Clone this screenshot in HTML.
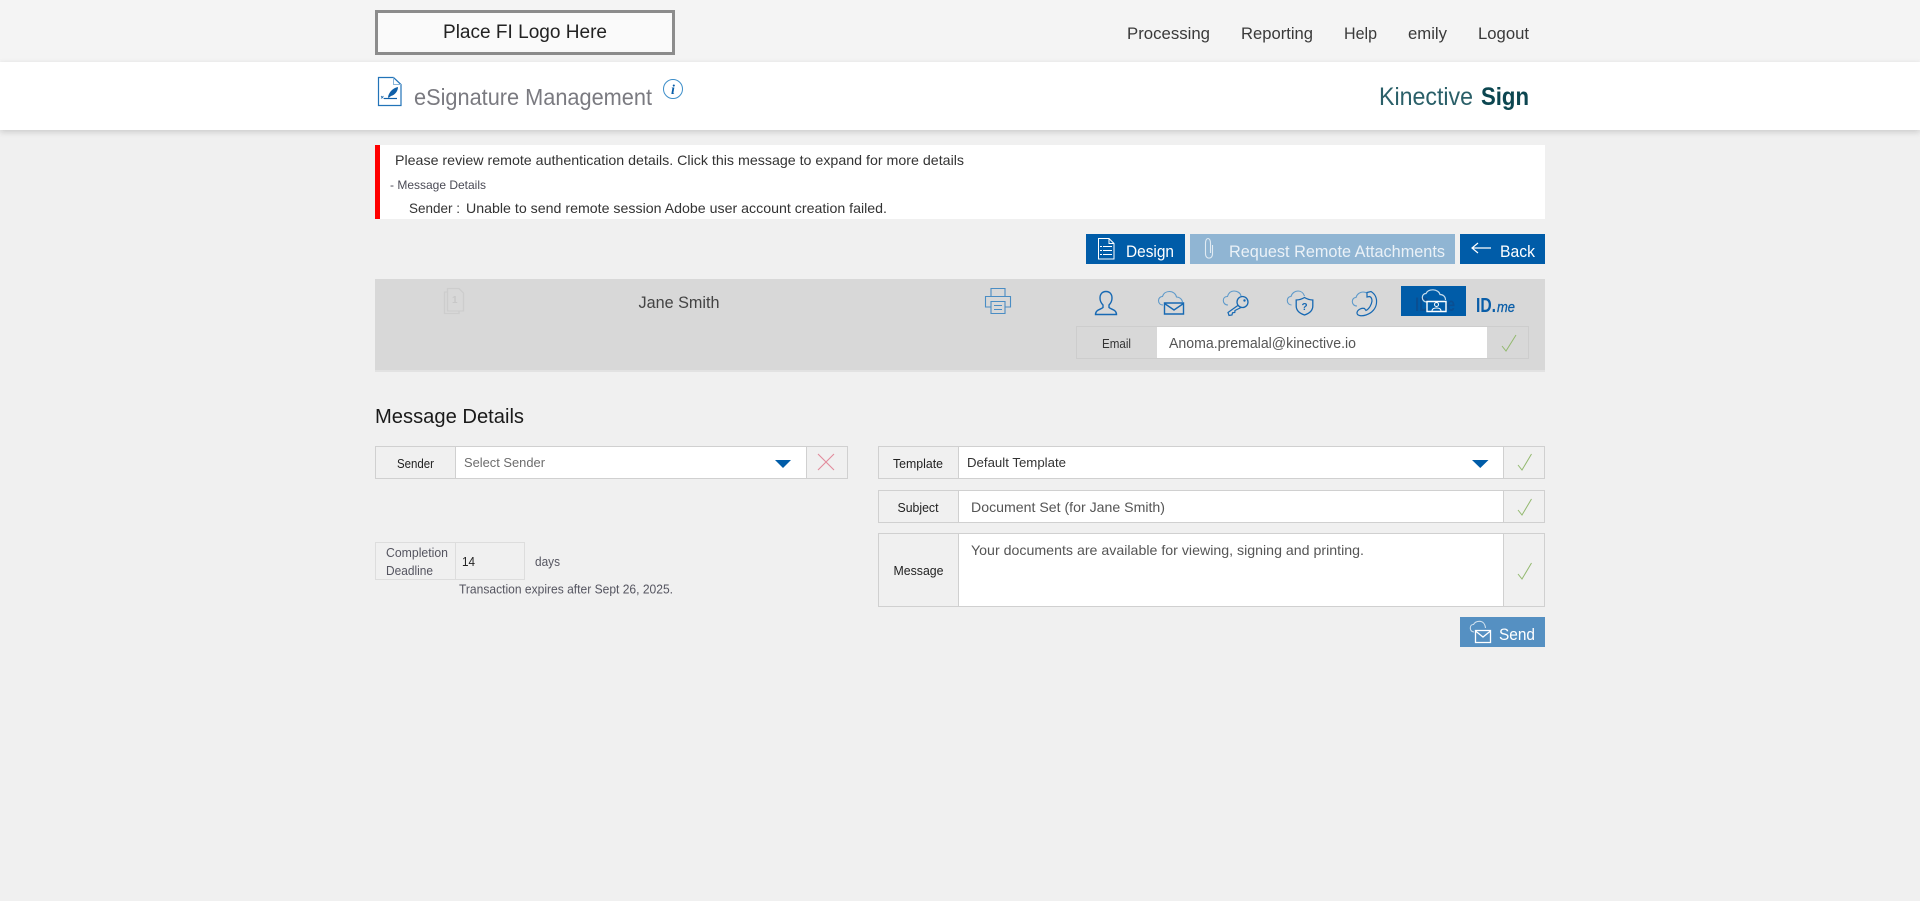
<!DOCTYPE html>
<html lang="en">
<head>
<meta charset="utf-8">
<title>eSignature Management</title>
<style>
html,body{margin:0;padding:0;width:1920px;height:901px;overflow:hidden;background:#f0f0f0;font-family:"Liberation Sans",sans-serif}
.b{position:absolute;box-sizing:border-box}
svg.o{position:absolute;left:0;top:0}
text{font-family:"Liberation Sans",sans-serif}
</style>
</head>
<body>
<div class="b" style="left:0;top:0;width:1920px;height:62px;background:#f4f4f4"></div>
<div class="b" style="left:0;top:62px;width:1920px;height:68px;background:#fff;box-shadow:0 2px 6px rgba(0,0,0,.16)"></div>
<div class="b" style="left:375px;top:10px;width:300px;height:45px;background:#fafafa;border:3px solid #8c8c8c"></div>

<div class="b" style="left:375px;top:145px;width:1170px;height:74px;background:#fff;border-left:5px solid #f00"></div>

<div class="b" style="left:1086px;top:234px;width:99px;height:30px;background:#005ca8"></div>
<div class="b" style="left:1190px;top:234px;width:265px;height:30px;background:#90b5d3"></div>
<div class="b" style="left:1460px;top:234px;width:85px;height:30px;background:#005ca8"></div>

<div class="b" style="left:375px;top:279px;width:1170px;height:93px;background:#d8d8d8;border-bottom:2px solid #e2e2e2"></div>
<div class="b" style="left:1401px;top:286px;width:65px;height:30px;background:#005ca8"></div>

<div class="b" style="left:1076px;top:326px;width:453px;height:33px;border:1px solid #cdcdcd"></div>
<div class="b" style="left:1157px;top:327px;width:330px;height:31px;background:#fff"></div>

<div class="b" style="left:375px;top:446px;width:473px;height:33px;border:1px solid #d0d0d0"></div>
<div class="b" style="left:455px;top:446px;width:352px;height:33px;background:#fff;border:1px solid #d0d0d0"></div>

<div class="b" style="left:375px;top:542px;width:150px;height:38px;border:1px solid #ddd"></div>
<div class="b" style="left:455px;top:542px;width:1px;height:38px;background:#ddd"></div>

<div class="b" style="left:878px;top:446px;width:667px;height:33px;border:1px solid #d0d0d0"></div>
<div class="b" style="left:958px;top:446px;width:546px;height:33px;background:#fff;border:1px solid #d0d0d0"></div>
<div class="b" style="left:878px;top:490px;width:667px;height:33px;border:1px solid #d0d0d0"></div>
<div class="b" style="left:958px;top:490px;width:546px;height:33px;background:#fff;border:1px solid #d0d0d0"></div>
<div class="b" style="left:878px;top:533px;width:667px;height:74px;border:1px solid #d0d0d0"></div>
<div class="b" style="left:958px;top:533px;width:546px;height:74px;background:#fff;border:1px solid #d0d0d0"></div>

<div class="b" style="left:1460px;top:617px;width:85px;height:30px;background:#5590c2"></div>

<svg class="o" width="1920" height="901" viewBox="0 0 1920 901" xmlns="http://www.w3.org/2000/svg">
<text x="443" y="38" font-size="19" fill="#222" textLength="164" lengthAdjust="spacingAndGlyphs">Place FI Logo Here</text>

<g font-size="16.5" fill="#3a3a3a">
<text x="1127" y="39" textLength="83" lengthAdjust="spacingAndGlyphs">Processing</text>
<text x="1241" y="39" textLength="72" lengthAdjust="spacingAndGlyphs">Reporting</text>
<text x="1344" y="39" textLength="33" lengthAdjust="spacingAndGlyphs">Help</text>
<text x="1408" y="39" textLength="39" lengthAdjust="spacingAndGlyphs">emily</text>
<text x="1478" y="39" textLength="51" lengthAdjust="spacingAndGlyphs">Logout</text>
</g>

<text x="414" y="105" font-size="23" fill="#7a7a80" textLength="238" lengthAdjust="spacingAndGlyphs">eSignature Management</text>
<text x="1379" y="105" font-size="25" fill="#2a5f68" textLength="94" lengthAdjust="spacingAndGlyphs">Kinective</text>
<text x="1481" y="105" font-size="25" font-weight="700" fill="#0c4650" textLength="48" lengthAdjust="spacingAndGlyphs">Sign</text>

<text x="395" y="165" font-size="14" fill="#333" textLength="569" lengthAdjust="spacingAndGlyphs">Please review remote authentication details. Click this message to expand for more details</text>
<text x="390" y="189" font-size="12" fill="#4a4a55" textLength="96" lengthAdjust="spacingAndGlyphs">- Message Details</text>
<text x="409" y="213" font-size="14" fill="#333" textLength="51" lengthAdjust="spacingAndGlyphs">Sender :</text>
<text x="466" y="213" font-size="14" fill="#333" textLength="421" lengthAdjust="spacingAndGlyphs">Unable to send remote session Adobe user account creation failed.</text>

<text x="1126" y="257" font-size="17" fill="#fff" textLength="48" lengthAdjust="spacingAndGlyphs">Design</text>
<text x="1229" y="257" font-size="17" fill="#eaf1f7" textLength="216" lengthAdjust="spacingAndGlyphs">Request Remote Attachments</text>
<text x="1500" y="257" font-size="17" fill="#fff" textLength="35" lengthAdjust="spacingAndGlyphs">Back</text>

<text x="638.500" y="308" font-size="17" fill="#444" textLength="81" lengthAdjust="spacingAndGlyphs">Jane Smith</text>
<text x="1102" y="348" font-size="13" fill="#333" textLength="29" lengthAdjust="spacingAndGlyphs">Email</text>
<text x="1169" y="348" font-size="14.500" fill="#555" textLength="187" lengthAdjust="spacingAndGlyphs">Anoma.premalal@kinective.io</text>

<text x="1415" y="311" font-size="19" font-weight="700" fill="#0a4f92" textLength="40" lengthAdjust="spacingAndGlyphs">ID.me</text>
<text x="1476" y="312" font-size="20" font-weight="700" fill="#0a5ea8" textLength="20" lengthAdjust="spacingAndGlyphs">ID.</text>
<text x="1497" y="312" font-size="15" font-style="italic" fill="#0a5ea8" stroke="#0a5ea8" stroke-width=".3" textLength="18" lengthAdjust="spacingAndGlyphs">me</text>

<text x="375" y="423" font-size="20" fill="#1a1a1a" textLength="149" lengthAdjust="spacingAndGlyphs">Message Details</text>

<text x="397" y="468" font-size="13" fill="#222" textLength="37" lengthAdjust="spacingAndGlyphs">Sender</text>
<text x="464" y="467" font-size="13" fill="#6d6d6d" textLength="81" lengthAdjust="spacingAndGlyphs">Select Sender</text>

<g font-size="12.500" fill="#555560">
<text x="386" y="557" textLength="62" lengthAdjust="spacingAndGlyphs">Completion</text>
<text x="386" y="575" textLength="47" lengthAdjust="spacingAndGlyphs">Deadline</text>
<text x="535" y="566" textLength="25" lengthAdjust="spacingAndGlyphs">days</text>
<text x="459" y="593.500" textLength="214" lengthAdjust="spacingAndGlyphs">Transaction expires after Sept 26, 2025.</text>
</g>
<text x="462" y="566" font-size="12.500" fill="#222" textLength="13" lengthAdjust="spacingAndGlyphs">14</text>

<text x="893" y="468" font-size="13" fill="#222" textLength="50" lengthAdjust="spacingAndGlyphs">Template</text>
<text x="967" y="467" font-size="13" fill="#333" textLength="99" lengthAdjust="spacingAndGlyphs">Default Template</text>
<text x="897.500" y="512" font-size="13" fill="#222" textLength="41" lengthAdjust="spacingAndGlyphs">Subject</text>
<text x="971" y="512" font-size="14" fill="#555" textLength="194" lengthAdjust="spacingAndGlyphs">Document Set (for Jane Smith)</text>
<text x="893.500" y="575" font-size="13" fill="#222" textLength="50" lengthAdjust="spacingAndGlyphs">Message</text>
<text x="971" y="555" font-size="14" fill="#555" textLength="393" lengthAdjust="spacingAndGlyphs">Your documents are available for viewing, signing and printing.</text>

<text x="1499" y="640" font-size="17" fill="#fff" textLength="36" lengthAdjust="spacingAndGlyphs">Send</text>

<!-- signature document icon -->
<path d="M378.500 77.500H393.500L401 84.500V105.500H378.500Z" fill="none" stroke="#2273b8" stroke-width="1.200"/>
<path d="M393.500 77.500V84.500H401" fill="none" stroke="#8ab6da" stroke-width="1"/>
<path d="M388 97C389 92 393 88 398 87C398 91 395 95 391 96L388.500 98Z" fill="#0f5fa8"/>
<path d="M384 98.500H397" stroke="#0f5fa8" stroke-width="1.200"/>
<path d="M381 96L383.500 98.500M383.500 96L381 98.500" stroke="#0f5fa8" stroke-width=".7"/>

<!-- info icon -->
<circle cx="673" cy="89" r="9.500" fill="#fff" stroke="#3d8ec9" stroke-width="1"/>
<text x="673" y="94" font-size="14" font-weight="700" font-style="italic" text-anchor="middle" fill="#0a5ea8" style="font-family:'Liberation Serif',serif">i</text>

<!-- design icon -->
<g fill="none" stroke="#fff" stroke-width="1">
<path d="M1098.500 238.500H1109L1114 243.500V259H1098.500Z"/><path d="M1109 238.500V243.500H1114"/>
<path d="M1103 246.500H1112M1103 250.500H1112M1103 254.500H1112M1100 246.500H1102M1100 250.500H1102M1100 254.500H1102"/>
</g>
<!-- clip -->
<path d="M1212.500 245V254C1212.500 259.500 1205.500 259.500 1205.500 254V243C1205.500 237 1210.500 237 1210.500 243V253" fill="none" stroke="#e1ebf3" stroke-width="1.100"/>
<!-- back arrow -->
<path d="M1491 248H1472M1478 243L1472 248L1478 253" fill="none" stroke="#fff" stroke-width="1.200"/>

<!-- grey doc icon -->
<g fill="none" stroke="#cdcdcd" stroke-width="1.300">
<path d="M447.500 288.500H459L463.500 293V311H447.500Z"/><path d="M447.500 292H444.500V313.500H459V311"/>
</g>
<text x="452" y="303" font-size="10" font-weight="700" fill="#c8c8c8">1</text>

<!-- printer -->
<g fill="none" stroke="#4a8dc4" stroke-width="1.100">
<path d="M991 296V288.500H1005V296"/>
<path d="M991 307H985.500V296.500H1010.500V307H1005"/>
<path d="M991 301.500H1005V313.500H991Z"/>
<path d="M994 305.500H1002M994 309.500H1002"/>
</g>

<!-- person -->
<path d="M1106 291.500C1101.500 291.500 1100 295 1100 298C1100 301 1101 303 1103 305V307.500C1101 309.500 1095.500 309.500 1095.500 314.500H1116.500C1116.500 309.500 1111 309.500 1109 307.500V305C1111 303 1112 301 1112 298C1112 295 1110.500 291.500 1106 291.500Z" fill="none" stroke="#1769b3" stroke-width="1.400"/>

<!-- cloud mail -->
<path d="M1163 305C1160 305 1158.500 303 1158.500 300.500C1158.500 298 1160.500 296.500 1162.500 296.500C1163.500 293 1166.500 291.500 1169.500 291.500C1173 291.500 1176 294 1176.500 297C1179.500 297 1182 299 1182.500 302" fill="none" stroke="#5f9aca" stroke-width="1.100"/>
<path d="M1164.500 303H1183.500V314H1164.500ZM1164.500 303.500L1174 310L1183.500 303.500" fill="#d8d8d8" stroke="#1769b3" stroke-width="1.400"/>

<!-- cloud key -->
<path d="M1228 305C1225 305 1223.300 303 1223.300 300.500C1223.300 298 1225 296.500 1227.500 296.500C1228.500 293 1231 291 1234 291C1237.500 291 1240.500 293 1241 296" fill="none" stroke="#5f9aca" stroke-width="1.100"/>
<path d="M1238.500 305L1228 312.500L1229 315.500L1232 315L1232.500 312.800L1234.800 312.500L1235 310.500L1241 307.500" fill="#d8d8d8" stroke="#1769b3" stroke-width="1.200"/>
<circle cx="1242.500" cy="302" r="5.500" fill="#d8d8d8" stroke="#1769b3" stroke-width="1.300"/>
<circle cx="1244.500" cy="300.500" r="1.200" fill="#1769b3"/>

<!-- cloud shield -->
<path d="M1291.500 305C1289 305 1287.300 303 1287.300 300.500C1287.300 298 1289 296.500 1291 296.500C1292 293 1295 291 1298 291C1301 291 1303.500 293 1304.500 296" fill="none" stroke="#5f9aca" stroke-width="1.100"/>
<path d="M1304.500 297.500C1307 299 1310 300 1312.800 300V306C1312.800 310.500 1309 313.500 1304.500 315C1300 313.500 1296.200 310.500 1296.200 306V300C1299 300 1302 299 1304.500 297.500Z" fill="#d8d8d8" stroke="#1769b3" stroke-width="1.300"/>
<text x="1304.500" y="310" font-size="10" font-weight="700" text-anchor="middle" fill="#1769b3">?</text>

<!-- cloud phone -->
<path d="M1357 306C1354 306 1352.300 304 1352.300 301.500C1352.300 299 1354 297.500 1356 297.500C1357 294 1360 292 1363 292C1365 292 1366.500 292.700 1367.500 293.500" fill="none" stroke="#5f9aca" stroke-width="1.100"/>
<path d="M1367 292.500L1371 291.500C1375 294 1377 298 1376.500 303C1376 308.500 1372 313 1366 315C1362 316.300 1357 316 1357 313C1357 310 1361.500 307.500 1364.500 308.500L1366 310.500C1369 309 1371.500 305 1372 301C1372 298.500 1371 297 1369.500 296.500L1367 297Z" fill="#d8d8d8" stroke="#1769b3" stroke-width="1.200"/>

<!-- active cloud id -->
<path d="M1427 302C1424 302 1422.300 300 1422.300 297.500C1422.300 295 1424 293.500 1426 293.500C1427 291 1430 289.800 1433 289.800C1436.500 289.800 1439.500 292 1440 294.500C1443 294.500 1445.500 296.500 1445.500 300" fill="none" stroke="#c4dbec" stroke-width="1.200"/>
<path d="M1427 301.500H1446V311.500H1427Z" fill="#005ca8" stroke="#fff" stroke-width="1.400"/>
<circle cx="1436.500" cy="304.500" r="2" fill="none" stroke="#fff" stroke-width="1"/>
<path d="M1432 311C1432 308.500 1434 308 1436.500 308C1439 308 1441 308.500 1441 311" fill="none" stroke="#fff" stroke-width="1"/>

<!-- checks -->
<g fill="none" stroke="#93b96f" stroke-width="1">
<path d="M1502 346L1506 351L1516 335"/>
<path d="M1518 465L1522 470L1531.500 454"/>
<path d="M1518 510L1522 515L1531.500 499"/>
<path d="M1518 574L1522 579L1531.500 563"/>
</g>

<!-- select arrows -->
<path d="M775 460H791L783 468Z" fill="#005ca8"/>
<path d="M1472 460H1488.500L1480.250 468Z" fill="#005ca8"/>

<!-- X -->
<path d="M818 454L834 470M834 454L818 470" stroke="#e28b9b" stroke-width="1.100" fill="none"/>

<!-- send icon -->
<path d="M1474 632C1471.500 632 1470.300 630 1470.300 628C1470.300 625.500 1472 624.500 1473.500 624.500C1474.500 622.500 1477 621.300 1479.500 621.300C1482.500 621.300 1485 623.500 1485.500 628" fill="none" stroke="#cfe0ee" stroke-width="1.100"/>
<path d="M1475.500 630.500H1490.500V642.500H1475.500ZM1475.500 631L1483 637L1490.500 631" fill="#5590c2" stroke="#fff" stroke-width="1.300"/>
</svg>
</body>
</html>
